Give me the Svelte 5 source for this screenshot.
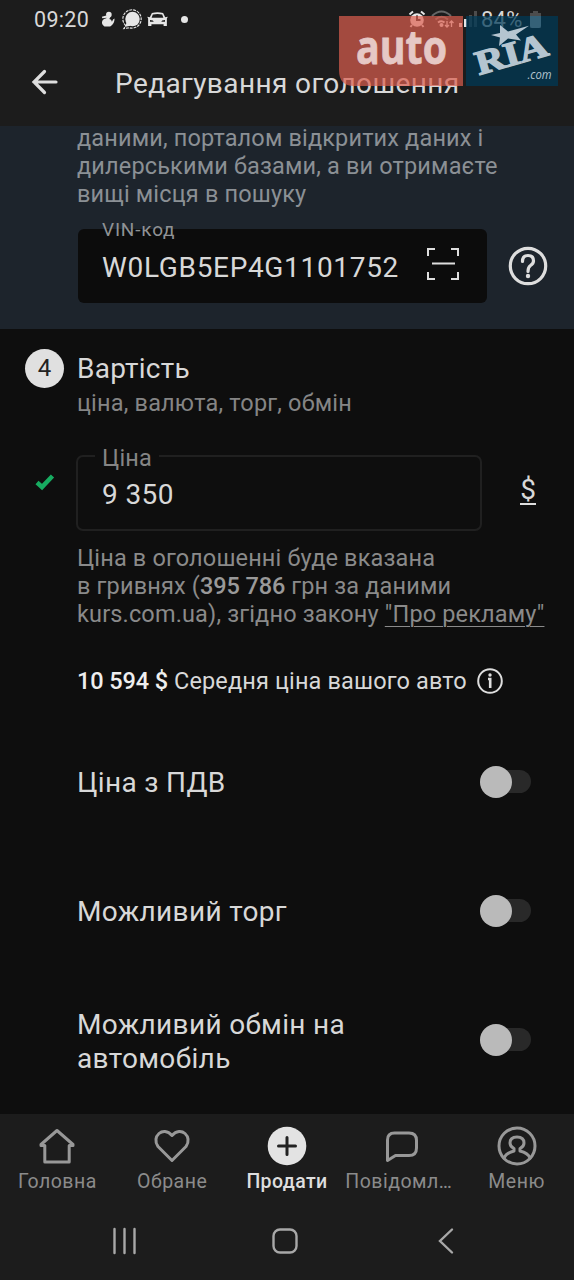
<script>
let vin = $state("W0LGB5EP4G1101752")
let price = $state("9 350")

let options = $state([
    {label: "Ціна з ПДВ", on: false},
    {label: "Можливий торг", on: false},
    {label: "Можливий обмін на автомобіль", on: false}
])

const tabs = [
    {id: "home", label: "Головна"},
    {id: "saved", label: "Обране"},
    {id: "sell", label: "Продати"},
    {id: "chat", label: "Повідомл…"},
    {id: "menu", label: "Меню"}
]
let active = $state("sell")
</script>

<div class="screen">
    <div class="status">
        <span class="time">09:20</span>
        <svg class="ghost" width="14" height="16" viewBox="0 0 16 18">
            <circle cx="9" cy="4" r="3.2"/>
            <path d="M6 5 11 6 9.500 9Q12 9 12.500 12Q13.500 9 15.500 8.500Q15.500 15 10.500 17.500H4Q0 15 1.500 11Q3 8 6 8L6.500 7.500 1.500 8 1 6.500Z"/>
        </svg>
        <svg class="signal" width="21" height="21" viewBox="0 0 22 22">
            <circle cx="11" cy="10.500" r="7.600"/>
            <path d="M5 13 3.500 18.500 9 17.500Z"/>
            <path class="ring" d="M4 17.500A9.600 9.600 0 1 1 8 19.700L2 20.500Z"/>
        </svg>
        <svg class="car" width="21" height="15" viewBox="0 0 22 16">
            <path fill-rule="evenodd" d="M5 1Q11-.5 17 1L19.200 5.500 22 5 21 7V15H17.500V13H4.500V15H1V7L0 5 2.800 5.500ZM6 2.700 4.700 6H17.300L16 2.700Q11 1.700 6 2.700ZM3 8.500V10.500H7L6 9ZM19 8.500 16 9 15 10.500H19Z"/>
        </svg>
        <span class="dot"></span>
        <div class="right">
            <svg width="18" height="18" viewBox="0 0 18 18">
                <circle cx="9" cy="10" r="6.800"/>
                <path class="thick" d="M1.500 4.500 5 1.500M16.500 4.500 13 1.500M4 15 2.500 17M14 15 15.500 17"/>
                <path class="hand" d="M9 5.500V10H12.500"/>
            </svg>
            <svg class="wifi" width="24" height="18" viewBox="0 0 24 18">
                <path class="faint" d="M1 6Q10.500-3 20 6M4.500 9.500Q10.500 4 17 9.500"/>
                <path class="arc" d="M7 12.500Q10.500 10 13.500 12.500"/>
                <circle cx="10.500" cy="15" r="2"/>
                <path class="thin" d="M16 11V17M14 15 16 17 18 15M20.500 17V11M18.500 13 20.500 11 22.500 13"/>
            </svg>
            <svg class="bars" width="19" height="18" viewBox="0 0 19 18">
                <path d="M0 13H3V17H0ZM5 9H8V17H5Z"/>
                <path class="dim" d="M10 5H13V17H10ZM15 1H18V17H15Z"/>
            </svg>
            <span class="battery">84%</span>
            <svg class="cell" width="11" height="17" viewBox="0 0 11 17">
                <path class="dim" d="M3 0H8V2H11V17H0V2H3Z"/>
                <path d="M0 5H11V15Q11 17 9 17H2Q0 17 0 15Z"/>
            </svg>
        </div>
    </div>

    <header>
        <svg width="28" height="28" viewBox="0 0 28 28">
            <path d="M25 14H3M13.500 3.500 3 14 13.500 24.500"/>
        </svg>
        <h1>Редагування оголошення</h1>
    </header>

    <section class="vin">
        <p>даними, порталом відкритих даних і<br>дилерськими базами, а ви отримаєте<br>вищі місця в пошуку</p>
        <div class="vinRow">
            <div class="vinBox">
                <span class="vinLabel">VIN-код</span>
                <span class="vinValue">{vin}</span>
                <svg width="32" height="32" viewBox="0 0 32 32">
                    <path d="M8 1H1V8M24 1H31V8M1 24V31H8M24 31H31V24M5 15.500H28"/>
                </svg>
            </div>
            <svg class="help" width="40" height="40" viewBox="0 0 40 40">
                <circle cx="20" cy="20" r="17.700"/>
                <path d="M14.500 15.500Q14.500 9.500 20 9.500Q25.500 9.500 25.500 15Q25.500 17.500 22.500 19.500Q20 21.200 20 25.500"/>
                <circle class="point" cx="20" cy="30" r="2.200"/>
            </svg>
        </div>
    </section>

    <main>
        <div class="step">
            <span class="num">4</span>
            <div>
                <h2>Вартість</h2>
                <div class="sub">ціна, валюта, торг, обмін</div>
            </div>
        </div>

        <div class="priceRow">
            <svg class="check" width="20" height="18" viewBox="0 0 20 18">
                <path d="M2 9.500 7 14 17.500 3"/>
            </svg>
            <fieldset>
                <legend>Ціна</legend>
                <span>{price}</span>
            </fieldset>
            <span class="currency">$</span>
        </div>

        <p class="note">Ціна в оголошенні буде вказана<br>в гривнях (<b>395 786</b> грн за даними<br>kurs.com.ua), згідно закону <u>"Про рекламу"</u></p>

        <div class="average">
            <span><b>10 594 $</b> Середня ціна вашого авто</span>
            <svg width="26" height="26" viewBox="0 0 26 26">
                <circle cx="13" cy="13" r="11.800"/>
                <path class="stem" d="M11 11H13.200V20"/>
                <circle class="point" cx="13" cy="7" r="1.700"/>
            </svg>
        </div>

        {#each options as option}
        <div class="option">
            <span>{option.label}</span>
            <button class="toggle" class:on={option.on} aria-label={option.label} onclick={() => option.on = !option.on}></button>
        </div>
        {/each}
    </main>

    <nav>
        {#each tabs as tab}
        <button class="tab {tab.id}" class:active={active == tab.id} onclick={() => active = tab.id}>
            <svg width="40" height="40" viewBox="0 0 40 40">
                {#if tab.id == "home"}
                <path d="M20 4.500 4 18.500V19.500H7.800V36H32.200V19.500H36V18.500Z"/>
                {:else if tab.id == "saved"}
                <path d="M20 34.500 6 20.500C-1 11 11-1 20 9.500C29-1 41 11 34 20.500Z"/>
                {:else if tab.id == "sell"}
                <circle class="disc" cx="20" cy="20" r="19.300"/>
                <path class="plus" d="M20 11.500V28.500M11.500 20H28.500"/>
                {:else if tab.id == "chat"}
                <path d="M5.500 34.500V14Q5.500 7 12.500 7H27Q34.500 7 34.500 14.500V22Q34.500 29.500 27 29.500H13.500Z"/>
                {:else}
                <circle cx="20" cy="20" r="18"/>
                <path d="M7 32Q9 27 17 25V22.500Q13 20.500 13 17Q13 11 20 11Q27 11 27 17Q27 20.500 23 22.500V25Q31 27 33 32"/>
                {/if}
            </svg>
            <span>{tab.label}</span>
        </button>
        {/each}
    </nav>

    <div class="system">
        <svg width="28" height="28" viewBox="0 0 28 28"><path d="M4.500 2V26M14.500 2V26M24.500 2V26"/></svg>
        <svg width="28" height="28" viewBox="0 0 28 28"><rect x="2.500" y="2.500" width="23" height="23" rx="6.500"/></svg>
        <svg width="28" height="28" viewBox="0 0 28 28"><path d="M20 2.500 8 14 20 25.500"/></svg>
    </div>

    <div class="watermark">
        <svg width="220" height="70" viewBox="0 0 220 70">
            <path class="red" d="M0 0H124V70H15Q0 70 0 54Z"/>
            <rect class="blue" x="127" width="92" height="70"/>
            <text class="auto" x="17" y="47.500" textLength="91" lengthAdjust="spacingAndGlyphs">auto</text>
            <text class="ria" textLength="74" lengthAdjust="spacingAndGlyphs" transform="translate(140 59) rotate(-16)">RIA</text>
            <path class="star" d="M161 9 169 15.500 190 9.700 177 18.500 182 24.500 169 22.500 160 30 161 21.500 152 19 161 17Z"/>
            <text class="com" x="188.500" y="62.500" textLength="24" lengthAdjust="spacingAndGlyphs">.com</text>
        </svg>
    </div>
</div>

<style>
    :global(body) {
        background: #0e0e0e;
    }
    .screen {
        position: relative;
        width: 574px;
        height: 1280px;
        display: flex;
        flex-direction: column;
        overflow: hidden;
        background: #0e0e0e;
        color: #d8d8d8;
        font-family: Roboto, sans-serif;
    }
    svg {
        display: block;
        flex: none;
        overflow: visible;
    }
    h1, h2, p {
        margin: 0;
        font-weight: 400;
    }
    button {
        border: 0;
        padding: 0;
        background: none;
        font-family: inherit;
    }
    .status {
        display: flex;
        align-items: center;
        height: 38px;
        padding: 0 33px 0 34px;
        background: #1c1c1c;
        fill: #e6e6e6;
    }
    .time {
        width: 67px;
        font-size: 21.5px;
        letter-spacing: 0.3px;
    }
    .signal {
        margin-left: 7px;
    }
    .ring {
        fill: none;
        stroke: #e6e6e6;
        stroke-width: 1.2;
        stroke-dasharray: 3 1;
    }
    .car {
        margin-left: 4px;
    }
    .dot {
        width: 7px;
        height: 7px;
        margin-left: 13px;
        border-radius: 50%;
        background: #e6e6e6;
    }
    .right {
        display: flex;
        align-items: center;
        margin-left: auto;
    }
    .right > svg:first-child {
        margin-right: -2px;
        margin-left: -4px;
    }
    .thick, .thin, .arc, .faint, .hand {
        fill: none;
        stroke: #e6e6e6;
        stroke-width: 2;
    }
    .hand {
        stroke: #1c1c1c;
    }
    .thin {
        stroke-width: 1.3;
    }
    .faint {
        stroke: #666;
    }
    .wifi {
        margin-left: 7px;
    }
    .bars {
        margin-left: 4px;
    }
    .dim {
        fill: #4c4c4c;
    }
    .battery {
        width: 44px;
        margin-left: 3px;
        font-size: 22px;
        letter-spacing: 0.2px;
    }
    .cell {
        margin-left: 5px;
        fill: #bfc5c9;
    }
    header {
        display: flex;
        align-items: center;
        gap: 56px;
        height: 88px;
        padding: 0 0 0 31px;
        box-sizing: border-box;
        background: #1c1c1c;
    }
    header svg, .vinBox svg, .check, .help, .average svg, .tab svg, .system svg {
        fill: none;
        stroke: #dedede;
        stroke-width: 3.2;
        stroke-linecap: round;
    }
    h1 {
        font-size: 28px;
        line-height: 36px;
        letter-spacing: 0.4px;
        padding-top: 3px;
        white-space: nowrap;
    }
    .vin {
        height: 203px;
        box-sizing: border-box;
        padding: 0 0 0 78px;
        background: #1d242c;
    }
    .vin p {
        margin: -2px 0 0 -1px;
        color: #8b9095;
        font-size: 23.5px;
        line-height: 28px;
        letter-spacing: 0.15px;
        white-space: nowrap;
        padding-bottom: 21px;
    }
    .vinRow {
        display: flex;
        align-items: center;
        gap: 21px;
    }
    .vinBox {
        position: relative;
        display: flex;
        align-items: center;
        width: 409px;
        height: 74px;
        padding: 0 28px 0 24px;
        box-sizing: border-box;
        border-radius: 6px;
        background: #0c0c0c;
    }
    .vinLabel {
        position: absolute;
        top: -10px;
        left: 24px;
        color: #8f9295;
        font-size: 19px;
        line-height: 22px;
        letter-spacing: 0.8px;
    }
    .vinValue {
        font-size: 28px;
        letter-spacing: 0.67px;
        padding-top: 2px;
    }
    .vinBox svg {
        margin-left: auto;
        margin-top: -5px;
        stroke-width: 2;
        stroke-linecap: butt;
    }
    main {
        display: flex;
        flex-direction: column;
        height: 785px;
        flex: none;
    }
    .step {
        display: flex;
        gap: 13px;
        height: 126px;
        padding: 20px 0 0 25px;
        box-sizing: border-box;
    }
    .num {
        width: 39px;
        height: 39px;
        border-radius: 50%;
        background: #e0e0e0;
        color: #222;
        font-size: 24px;
        line-height: 39px;
        text-align: center;
    }
    h2 {
        font-size: 28px;
        line-height: 40px;
        letter-spacing: 0.25px;
    }
    .sub {
        color: #858585;
        font-size: 23.5px;
        line-height: 28px;
        letter-spacing: 0.18px;
    }
    .priceRow {
        display: flex;
        align-items: center;
        height: 76px;
        padding-left: 35px;
    }
    .check {
        margin-top: -23px;
        margin-right: 21px;
        stroke: #17ac61;
        stroke-width: 4.5;
        stroke-linecap: butt;
    }
    fieldset {
        width: 406px;
        height: 90px;
        margin: -15px 0 0;
        padding: 0 17px;
        box-sizing: border-box;
        border: 2px solid #202020;
        border-radius: 7px;
        font-size: 28px;
        line-height: 32px;
        letter-spacing: 0.4px;
    }
    legend {
        margin-left: 0;
        padding: 3px 7px 0;
        color: #858585;
        font-size: 23.5px;
        line-height: 28px;
        letter-spacing: 0.2px;
    }
    fieldset span {
        display: block;
        padding: 7px 0 0 7px;
    }
    .currency {
        width: 16px;
        margin: -4px 0 0 38px;
        border-bottom: 2px solid #dedede;
        font-size: 28px;
        line-height: 26px;
        text-align: center;
    }
    .note {
        padding: 13px 0 0 77px;
        color: #8a8a8a;
        font-size: 23.5px;
        line-height: 28px;
        letter-spacing: 0.15px;
        white-space: nowrap;
    }
    .note u {
        text-underline-offset: 4px;
        text-decoration-thickness: 1px;
    }
    b {
        font-weight: 500;
        letter-spacing: -0.1px;
    }
    .note b {
        color: #999;
    }
    .average {
        display: flex;
        align-items: center;
        gap: 10px;
        margin-top: 36px;
        height: 34px;
        padding-left: 77px;
        font-size: 23.5px;
        letter-spacing: 0.14px;
        white-space: nowrap;
    }
    .average b {
        color: #eee;
    }
    .average svg {
        stroke-width: 2;
        stroke-linecap: butt;
    }
    .average .stem {
        stroke-width: 2.6;
    }
    .point {
        fill: #dedede;
        stroke: none;
    }
    .option {
        display: flex;
        align-items: center;
        justify-content: space-between;
        height: 129px;
        flex: none;
        padding: 0 43px 0 77px;
        font-size: 28px;
        line-height: 34px;
        letter-spacing: 0.33px;
    }
    .average + .option {
        margin-top: 19px;
    }
    .option span {
        width: 300px;
        padding-top: 3px;
    }
    .option:last-child span {
        padding-top: 4px;
    }
    .toggle {
        display: flex;
        align-items: center;
        width: 51px;
        height: 23px;
        border-radius: 12px;
        background: #292929;
    }
    .toggle::before {
        content: "";
        width: 32px;
        height: 32px;
        border-radius: 50%;
        background: #bababa;
    }
    .toggle.on {
        justify-content: flex-end;
    }
    nav {
        display: grid;
        grid-template-columns: repeat(5, 1fr);
        height: 90px;
        flex: none;
        background: #1c1c1c;
    }
    .tab {
        display: flex;
        flex-direction: column;
        align-items: center;
        padding-top: 12px;
        color: #8b8b8b;
        font-size: 19.5px;
        line-height: 24px;
        letter-spacing: 0.5px;
        gap: 4px;
        white-space: nowrap;
    }
    .tab svg {
        stroke: #989898;
        stroke-width: 3;
        stroke-linejoin: round;
    }
    .tab.chat span {
        margin-left: -6px;
    }
    .tab.active {
        color: #dedede;
        font-weight: 500;
        letter-spacing: 0.4px;
    }
    .tab .disc {
        fill: #e3e3e3;
        stroke: none;
    }
    .tab .plus {
        stroke: #222;
    }
    .system {
        display: flex;
        justify-content: space-between;
        padding: 23px 114px 0 110px;
        height: 76px;
        box-sizing: border-box;
        background: #1c1c1c;
    }
    .system svg {
        stroke: #a8a8a8;
        stroke-width: 2.4;
    }
    .watermark {
        position: absolute;
        top: 16px;
        left: 339px;
    }
    .red {
        fill: #dd5e4f;
        opacity: 0.7;
    }
    .blue {
        fill: #003a58;
        opacity: 0.72;
    }
    .star {
        fill: #b5c5d0;
    }
    .auto {
        fill: #e6c8c5;
        stroke: #e6c8c5;
        stroke-width: 0.8;
        font: 700 46px "Open Sans", sans-serif;
    }
    .ria {
        fill: #b5c5d0;
        stroke: #b5c5d0;
        stroke-width: 1.4;
        font: bold 34px "Liberation Serif", serif;
    }
    .com {
        fill: #b5c5d0;
        font: italic 12px "Open Sans", sans-serif;
    }
</style>
